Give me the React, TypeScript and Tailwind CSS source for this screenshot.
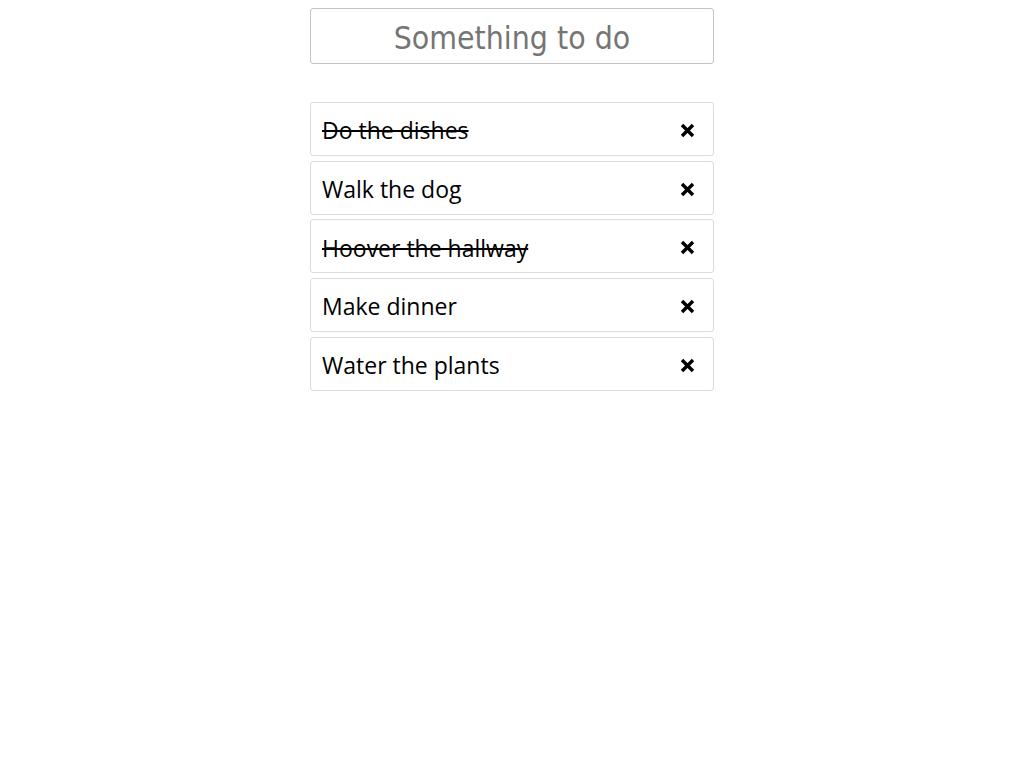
import { useState } from 'react'

type Todo = { id: number; text: string; done: boolean }

const initialTodos: Todo[] = [
  { id: 1, text: 'Do the dishes', done: true },
  { id: 2, text: 'Walk the dog', done: false },
  { id: 3, text: 'Hoover the hallway', done: true },
  { id: 4, text: 'Make dinner', done: false },
  { id: 5, text: 'Water the plants', done: false },
]

function CrossIcon() {
  return (
    <svg width="15" height="15" viewBox="0 0 15 15" aria-hidden="true">
      <path d="M2 2 L13 13 M13 2 L2 13" stroke="#000" strokeWidth="3.4" strokeLinecap="butt" />
    </svg>
  )
}

export default function App() {
  const [todos, setTodos] = useState(initialTodos)
  const [draft, setDraft] = useState('')

  function toggle(id: number) {
    setTodos(todos.map((t) => (t.id === id ? { ...t, done: !t.done } : t)))
  }

  function remove(id: number) {
    setTodos(todos.filter((t) => t.id !== id))
  }

  return (
    <div className="min-h-screen bg-white pt-2" style={{ fontFamily: '"Open Sans", "Noto Sans", sans-serif' }}>
      <div className="mx-auto w-[404px]">
        <form
          onSubmit={(e) => {
            e.preventDefault()
            if (!draft.trim()) return
            setTodos([...todos, { id: Date.now(), text: draft.trim(), done: false }])
            setDraft('')
          }}
        >
          <input
            value={draft}
            onChange={(e) => setDraft(e.target.value)}
            placeholder="Something to do"
            className="block h-14 w-full rounded-[3px] border border-[#c4c4c4] pt-[3px] text-center text-[31.7px] text-[#333] outline-none placeholder:text-[#757575]"
            style={{ fontFamily: '"DejaVu Sans Condensed", "DejaVu Sans", sans-serif' }}
          />
        </form>

        <ul className="mt-[38px] flex flex-col gap-[4.7px]">
          {todos.map((todo) => (
            <li
              key={todo.id}
              className="flex h-[54px] items-center justify-between rounded-[3px] border border-[#dcdcdc] pl-[11px] pr-[18px] pt-[3px]"
            >
              <span
                onClick={() => toggle(todo.id)}
                className={`cursor-pointer text-[23px] text-black ${todo.done ? 'line-through' : ''}`}
              >
                {todo.text}
              </span>
              <button onClick={() => remove(todo.id)} className="flex items-center">
                <CrossIcon />
              </button>
            </li>
          ))}
        </ul>
      </div>
    </div>
  )
}
